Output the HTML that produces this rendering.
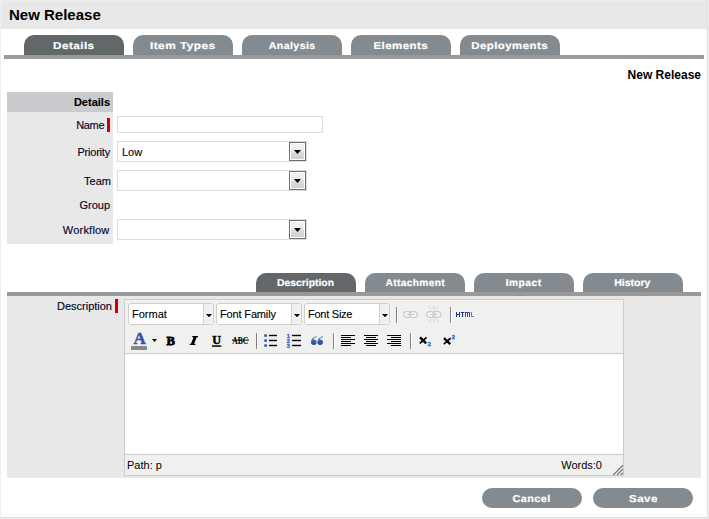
<!DOCTYPE html>
<html>
<head>
<meta charset="utf-8">
<title>New Release</title>
<style>
html,body{margin:0;padding:0;}
body{width:709px;height:519px;overflow:hidden;background:#fff;position:relative;font-family:"Liberation Sans",sans-serif;font-size:11px;color:#0a0a33;}
.abs{position:absolute;}
#frame{position:absolute;left:0;top:0;width:707px;height:517px;border:1px solid #eeeeee;border-right:none;border-bottom:none;}
#fr{position:absolute;left:707px;top:0;width:1px;height:518px;background:#e0e0e0;}
#fr2{position:absolute;left:708px;top:0;width:1px;height:519px;background:#eeeeee;}
#fb{position:absolute;left:0;top:517px;width:708px;height:1px;background:#e0e0e0;}
#fb2{position:absolute;left:0;top:518px;width:709px;height:1px;background:#eeeeee;}
#hdr{position:absolute;left:1px;top:1px;width:706px;height:28px;background:#e8e8e8;}
#title{position:absolute;left:9px;top:6px;font-weight:bold;font-size:15px;line-height:18px;color:#000;white-space:nowrap;}
.tab{position:absolute;width:100px;height:20px;background:#838b90;border-radius:10px 10px 0 0;color:#fff;text-rendering:geometricPrecision;font-weight:bold;font-size:10px;letter-spacing:0;text-align:center;line-height:24px;white-space:nowrap;-webkit-text-stroke:0.2px #fff;}
.tab.on{background:#62676a;}
.tab2{height:19px;line-height:21px;}
.bar{position:absolute;height:4px;background:#999999;}
#rt{position:absolute;right:8px;top:68px;font-weight:bold;font-size:12px;line-height:15px;color:#000;white-space:nowrap;}
#p1{position:absolute;left:7px;top:92px;width:106px;height:152px;background:#e8e8e8;}
#p1h{position:absolute;left:7px;top:92px;width:106px;height:20px;background:#c9cbcf;}
.lbl{-webkit-text-stroke:0.15px #05052a;color:#05052a;position:absolute;text-align:right;white-space:nowrap;line-height:13px;font-size:11px;}
.req{position:absolute;width:3px;height:14px;background:#cc0000;}
.inp{position:absolute;background:#fff;border:1px solid #dcdcdc;box-sizing:border-box;}
.sel{position:absolute;background:#fff;border:1px solid #dcdcdc;box-sizing:border-box;width:190px;height:21px;}
.sel .btn{position:absolute;right:0;top:0;width:17px;height:19px;box-sizing:border-box;border:1px solid #707070;background:#fff;}
.sel .btn i{position:absolute;left:1px;top:1px;right:1px;bottom:1px;background:linear-gradient(#f2f2f2 0%,#ebebeb 48%,#dddddd 52%,#cfcfcf 100%);}
.sel .btn svg{position:absolute;left:4px;top:7px;}
.sel span{-webkit-text-stroke:0.15px #05052a;color:#05052a;position:absolute;left:4px;top:4px;line-height:13px;font-size:11px;}
#p2{position:absolute;left:7px;top:296px;width:694px;height:182px;background:#e8e8e8;}
#ed{position:absolute;left:124px;top:299px;width:500px;height:177px;box-sizing:border-box;border:1px solid #cccccc;background:#f0f0ee;}
#edc{position:absolute;left:0;top:53px;width:498px;height:100px;background:#fff;border-top:1px solid #cccccc;border-bottom:1px solid #cccccc;}
.lb{position:absolute;top:3px;width:86px;height:22px;box-sizing:border-box;border:1px solid #cfcfcf;border-radius:3px;background:#fff;overflow:hidden;}
.lb b{position:absolute;left:74px;top:0;width:10px;height:20px;background:#f0f0ee;border-left:1px solid #cfcfcf;}
.lb span{-webkit-text-stroke:0.12px #000;position:absolute;left:3px;top:4px;font-size:11px;line-height:13px;color:#000;white-space:nowrap;}
.lb svg{position:absolute;left:76.6px;top:10px;}
.sep{position:absolute;width:1px;height:16px;background:linear-gradient(#8a8088 0 4px,#5f74b2 4px 5px,#8a8088 5px 9px,#5f74b2 9px 10px,#8a8088 10px 12px,#5f74b2 12px 13px,#8a8088 13px);}
.sep:after{content:"";position:absolute;left:1px;top:0;width:1px;height:16px;background:#fff;}
.st{position:absolute;font-size:11px;line-height:13px;color:#000;white-space:nowrap;}
.pill{position:absolute;width:100px;height:20px;border-radius:10px;background:#838b90;color:#fff;text-rendering:geometricPrecision;font-weight:bold;font-size:10px;letter-spacing:0.4px;text-align:center;line-height:23px;-webkit-text-stroke:0.2px #fff;}
svg{display:block;}
</style>
</head>
<body>
<div id="frame"></div><div id="fr"></div><div id="fr2"></div><div id="fb"></div><div id="fb2"></div>
<div id="hdr"></div>
<div id="title">New Release</div>

<div class="tab on" style="left:24px;top:35px;"><span style="display:inline-block;letter-spacing:0.4px;transform:scaleX(1.168);">Details</span></div>
<div class="tab" style="left:133px;top:35px;"><span style="display:inline-block;letter-spacing:0.4px;transform:scaleX(1.183);">Item Types</span></div>
<div class="tab" style="left:242px;top:35px;"><span style="display:inline-block;letter-spacing:0.4px;transform:scaleX(1.059);">Analysis</span></div>
<div class="tab" style="left:351px;top:35px;"><span style="display:inline-block;letter-spacing:0.4px;transform:scaleX(1.146);">Elements</span></div>
<div class="tab" style="left:460px;top:35px;"><span style="display:inline-block;letter-spacing:0.4px;transform:scaleX(1.142);">Deployments</span></div>
<div class="bar" style="left:4px;top:55px;width:700px;"></div>

<div id="rt">New Release</div>

<div id="p1"></div><div id="p1h"></div>
<div class="lbl" style="left:7px;width:103px;top:96px;font-weight:bold;color:#000;">Details</div>
<div class="lbl" style="left:7px;width:97.3px;top:119px;letter-spacing:-0.3px;">Name</div>
<div class="req" style="left:107px;top:118px;"></div>
<div class="inp" style="left:117px;top:116px;width:206px;height:17px;"></div>
<div class="lbl" style="left:7px;width:103px;top:146px;letter-spacing:-0.2px;">Priority</div>
<div class="sel" style="left:117px;top:141px;"><span>Low</span><div class="btn"><i></i><svg width="7" height="4" viewBox="0 0 7 4"><path d="M0 0h7L3.5 4z" fill="#000"/></svg></div></div>
<div class="lbl" style="left:7px;width:104px;top:175px;">Team</div>
<div class="sel" style="left:117px;top:170px;"><div class="btn"><i></i><svg width="7" height="4" viewBox="0 0 7 4"><path d="M0 0h7L3.5 4z" fill="#000"/></svg></div></div>
<div class="lbl" style="left:7px;width:103px;top:199px;">Group</div>
<div class="lbl" style="left:7px;width:102.5px;top:224px;letter-spacing:0.2px;">Workflow</div>
<div class="sel" style="left:117px;top:219px;"><div class="btn"><i></i><svg width="7" height="4" viewBox="0 0 7 4"><path d="M0 0h7L3.5 4z" fill="#000"/></svg></div></div>

<div class="tab tab2 on" style="left:256px;top:273px;"><span style="display:inline-block;letter-spacing:0px;transform:scaleX(1.037);">Description</span></div>
<div class="tab tab2" style="left:365px;top:273px;"><span style="display:inline-block;letter-spacing:0.35px;transform:scaleX(1.02);">Attachment</span></div>
<div class="tab tab2" style="left:474px;top:273px;"><span style="display:inline-block;letter-spacing:0.5px;transform:scaleX(1.02);">Impact</span></div>
<div class="tab tab2" style="left:583px;top:273px;"><span style="display:inline-block;letter-spacing:0px;position:relative;left:-1px;transform:scaleX(1.05);">History</span></div>
<div class="bar" style="left:7px;top:292px;width:694px;"></div>
<div id="p2"></div>
<div class="lbl" style="left:7px;width:105px;top:300px;">Description</div>
<div class="req" style="left:115px;top:299px;"></div>

<div id="ed">
  <div id="edc"></div>
  <div class="lb" style="left:3px;"><span>Format</span><b></b><svg width="6" height="3" viewBox="0 0 6 3"><path d="M0 0h6L3 3.2z" fill="#000"/></svg></div>
  <div class="lb" style="left:91px;"><span style="letter-spacing:-0.15px">Font Family</span><b></b><svg width="6" height="3" viewBox="0 0 6 3"><path d="M0 0h6L3 3.2z" fill="#000"/></svg></div>
  <div class="lb" style="left:179px;"><span style="letter-spacing:-0.25px">Font Size</span><b></b><svg width="6" height="3" viewBox="0 0 6 3"><path d="M0 0h6L3 3.2z" fill="#000"/></svg></div>
  <div class="sep" style="left:271px;top:7px;"></div>
  <div class="sep" style="left:325px;top:7px;"></div>
  <div class="sep" style="left:131px;top:33px;"></div>
  <div class="sep" style="left:208px;top:33px;"></div>
  <div class="sep" style="left:285px;top:33px;"></div>
  <div class="st" style="left:2px;top:159px;">Path: p</div>
  <div class="st" style="right:21px;top:159px;">Words:0</div>
</div>


<svg class="abs" style="left:0;top:0;" width="709" height="519" viewBox="0 0 709 519">
<g opacity="0.5" fill="#fff" stroke="#9aa8c2" stroke-width="1.2">
<rect x="403.7" y="311.7" width="7.6" height="5.6" rx="2.8"/><rect x="409.7" y="311.7" width="7.6" height="5.6" rx="2.8"/>
<path d="M407 314.5h7" stroke="#8b9bb8"/>
<path d="M433 311.7h-3.5a2.8 2.8 0 0 0 0 5.6h3.5zM434.5 311.7h3.5a2.8 2.8 0 0 1 0 5.6h-3.5z"/>
<path d="M430 314.5h3M435 314.5h3" fill="none"/>
<path d="M433.8 306v3.6M428.6 306.6l2.8 2.9M439 305.8l-3 3.4M433.8 319v3.5M428.6 322l2.8-2.9M438.6 322l-2.6-3" stroke-width="0.9" fill="none"/>
</g>
<g fill="#1a3580">
<rect x="456" y="312" width="1" height="5"/><rect x="459" y="312" width="1" height="5"/><rect x="456" y="314" width="4" height="1"/>
<rect x="460.7" y="312" width="3.7" height="1"/><rect x="462" y="312" width="1.1" height="5"/>
</g>
<g fill="#2a52c4"><rect x="465" y="312" width="5" height="1"/><rect x="465" y="312" width="1" height="5"/><rect x="467" y="312" width="1" height="5"/><rect x="469" y="312" width="1" height="5"/></g>
<g fill="#5585e6"><rect x="471" y="312" width="1" height="5"/><rect x="471" y="316" width="3" height="1"/></g>

<text x="139.6" y="344.3" text-anchor="middle" font-family="Liberation Serif" font-weight="bold" font-size="17" fill="#3354a2" stroke="#3354a2" stroke-width="0.5">A</text>
<rect x="131" y="346" width="16" height="4" fill="#888888"/>
<path d="M152 339h5l-2.5 3z" fill="#000"/>
<g font-family="Liberation Serif" font-weight="bold" fill="#000" text-anchor="middle" stroke="#000" stroke-width="0.5">
<text x="170.6" y="344.6" font-size="12.6" stroke-width="0.8">B</text>
<path stroke="none" d="M192.3 336h5.7v1.3h-1.3l-2.6 6.4h1.3v1.3h-5.7v-1.3h1.3l2.6-6.4h-1.3z"/>
<text x="216.7" y="344" font-size="12">U</text>
</g>
<rect x="212" y="345.3" width="9.3" height="1.5" fill="#000"/>
<text x="240.3" y="344" text-anchor="middle" font-family="Liberation Serif" font-weight="bold" font-size="10" fill="#000" textLength="16" lengthAdjust="spacingAndGlyphs">ABC</text>
<rect x="232" y="339.6" width="17" height="1" fill="#000"/>

<g fill="#3a66c4"><circle cx="265.6" cy="335.5" r="1.6"/><circle cx="265.6" cy="340.5" r="1.6"/><circle cx="265.6" cy="345.5" r="1.6"/></g>
<g fill="#000"><rect x="269" y="334.8" width="8" height="1.4"/><rect x="269" y="339.8" width="8" height="1.4"/><rect x="269" y="344.8" width="8" height="1.4"/>
<rect x="292" y="334.8" width="9" height="1.4"/><rect x="292" y="339.8" width="9" height="1.4"/><rect x="292" y="344.8" width="9" height="1.4"/></g>
<g font-family="Liberation Sans" font-weight="bold" font-size="5.6" fill="#2f5fd0" text-anchor="middle" stroke="#2f5fd0" stroke-width="0.3">
<text x="288.4" y="338">1</text><text x="288.4" y="343">2</text><text x="288.4" y="348">3</text></g>
<defs><linearGradient id="qg" x1="0" y1="0" x2="0" y2="1"><stop offset="0" stop-color="#5b82d0"/><stop offset="1" stop-color="#26468e"/></linearGradient></defs>
<g fill="url(#qg)">
<path transform="translate(311,336)" d="M5.6 0C2.2 0.9 0 3.2 0 6.1A2.8 2.8 0 1 0 2.8 3.4C2.6 3.4 2.4 3.42 2.2 3.46C2.6 2.3 3.8 1.4 5.6 1Z"/>
<path transform="translate(317.4,336)" d="M5.6 0C2.2 0.9 0 3.2 0 6.1A2.8 2.8 0 1 0 2.8 3.4C2.6 3.4 2.4 3.42 2.2 3.46C2.6 2.3 3.8 1.4 5.6 1Z"/>
</g>
<g fill="#000">
<rect x="341" y="335" width="14" height="1"/><rect x="341" y="337" width="10" height="1"/><rect x="341" y="339" width="14" height="1"/><rect x="341" y="341" width="10" height="1"/><rect x="341" y="343" width="14" height="1"/><rect x="341" y="345" width="10" height="1"/>
<rect x="364" y="335" width="14" height="1"/><rect x="366" y="337" width="10" height="1"/><rect x="364" y="339" width="14" height="1"/><rect x="366" y="341" width="10" height="1"/><rect x="364" y="343" width="14" height="1"/><rect x="366" y="345" width="10" height="1"/>
<rect x="387" y="335" width="14" height="1"/><rect x="391" y="337" width="10" height="1"/><rect x="387" y="339" width="14" height="1"/><rect x="391" y="341" width="10" height="1"/><rect x="387" y="343" width="14" height="1"/><rect x="391" y="345" width="10" height="1"/>
</g>
<g stroke="#000" fill="none"><path stroke-width="2.4" d="M420 337.4l6.2 6"/><path stroke-width="1.7" d="M426.6 337.4l-6.8 6"/><path stroke-width="2.4" d="M444 338.2l6.2 6"/><path stroke-width="1.7" d="M450.6 338.2l-6.8 6"/></g>
<g font-family="Liberation Sans" font-weight="bold" font-size="5.6" fill="#2f5fd0" stroke="#2f5fd0" stroke-width="0.3"><text x="427.8" y="346">2</text><text x="451.8" y="339">2</text></g>
<g stroke="#fff" stroke-width="1"><path d="M615.2 475l7.8-7.8M618.9 475l4.1-4.1"/></g><g stroke="#7f7f7f" stroke-width="1.5"><path d="M613.3 475l9.7-9.7M617 475l6-6M620.7 475l2.3-2.3"/></g>
</svg>
<div class="pill" style="left:482px;top:488px;"><span style="display:inline-block;transform:scaleX(1.086);">Cancel</span></div>
<div class="pill" style="left:593px;top:488px;"><span style="display:inline-block;transform:scaleX(1.16);">Save</span></div>
</body>
</html>
